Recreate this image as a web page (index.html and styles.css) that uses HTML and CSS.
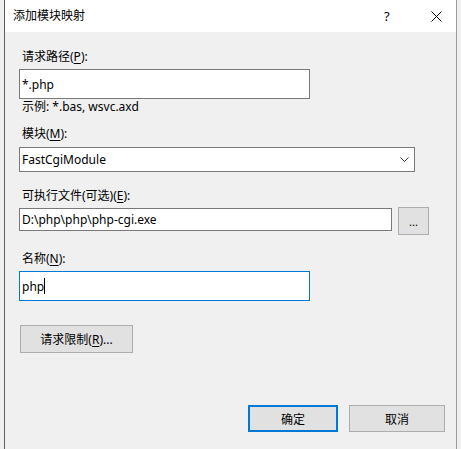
FILE: index.html
```html
<!DOCTYPE html>
<html lang="zh-CN">
  <head>
    <meta charset="UTF-8" />
    <title>添加模块映射</title>
    <link rel="stylesheet" href="styles.css">
  </head>
  <body>
    <div class="dialog">
      <div class="titlebar">
        <span class="title">添加模块映射</span>
        <span class="help">?</span>
        <span class="close">
          <svg width="11" height="11" viewBox="0 0 11 11">
            <path d="M0.5,0.5 L10.5,10.5 M10.5,0.5 L0.5,10.5" stroke="#000" stroke-width="1" fill="none"/>
          </svg>
        </span>
      </div>

      <div class="content">
        <label class="label first">请求路径(<u>P</u>):</label>
        <div class="field tall short">*.php</div>
        <div class="hint">示例: *.bas, wsvc.axd</div>

        <label class="label">模块(<u>M</u>):</label>
        <div class="field combo">
          <span>FastCgiModule</span>
          <svg width="9" height="5" viewBox="0 0 9 5">
            <polyline points="0.5,0.5 4.5,4.5 8.5,0.5" stroke="#333" stroke-width="1" fill="none"/>
          </svg>
        </div>

        <label class="label">可执行文件(可选)(<u>E</u>):</label>
        <div class="file-row">
          <div class="field path">D:\php\php\php-cgi.exe</div>
          <button class="btn browse">...</button>
        </div>

        <label class="label">名称(<u>N</u>):</label>
        <div class="field tall short focused">php<span class="caret"></span></div>

        <button class="btn limits">请求限制(<u>R</u>)...</button>

        <div class="footer">
          <button class="btn ok">确定</button>
          <button class="btn cancel">取消</button>
        </div>
      </div>
    </div>
  </body>
</html>
```

FILE: styles.css
```css
body {
  margin: 0;
  background-color: #f0f0f0;
  font-family: "Noto Sans", "Noto Sans CJK SC", sans-serif;
  font-size: 12px;
  color: #000;
}

.dialog {
  margin-left: 4px;
  width: 451px;
  height: 449px;
  border-left: 1px solid #5f5f5f;
  border-right: 1px solid #9a9a9a;
  display: flex;
  flex-direction: column;
}

.titlebar {
  height: 32px;
  background-color: #fff;
  display: flex;
  align-items: center;
  padding-left: 8px;
}

.title {
  flex: 1;
  line-height: 16px;
}

.help {
  width: 14px;
  margin-right: 33px;
  font-size: 13px;
}

.close {
  width: 11px;
  margin-right: 14px;
  display: flex;
}

.content {
  flex: 1;
  display: flex;
  flex-direction: column;
  align-items: flex-start;
  padding: 0 0 17px 14px;
}

.label {
  display: block;
  line-height: 16px;
  margin-top: 16px;
  padding-left: 3px;
}

.label.first {
  margin-top: 17px;
}

u {
  text-decoration-thickness: 1px;
  text-underline-offset: 2px;
}

.field {
  box-sizing: border-box;
  margin-top: 4px;
  background-color: #fff;
  border: 1px solid #7a7a7a;
  padding: 0 3px 0 2px;
  display: flex;
  align-items: center;
  height: 23px;
}

.field.tall {
  height: 30px;
}

.field.short {
  width: 291px;
}

.hint {
  line-height: 16px;
  margin-top: 0;
  padding-left: 3px;
}

.hint + .label {
  margin-top: 11px;
}

.combo {
  width: 396px;
  height: 25px;
  margin-top: 5px;
  justify-content: space-between;
  padding-right: 5px;
}

.file-row {
  display: flex;
  align-items: flex-start;
  margin-top: 3px;
}

.path {
  width: 373px;
  margin-top: 1px;
}

.focused {
  border-color: #0078d7;
}

.caret {
  display: inline-block;
  width: 1px;
  height: 16px;
  background-color: #000;
}

.btn {
  font: inherit;
  box-sizing: border-box;
  background-color: #e1e1e1;
  border: 1px solid #adadad;
  padding: 0;
  color: #000;
}

.browse {
  width: 31px;
  height: 28px;
  margin-left: 6px;
  font-size: 11px;
}

.limits {
  width: 113px;
  height: 28px;
  margin-top: 24px;
  margin-left: 1px;
}

.footer {
  margin-top: auto;
  align-self: stretch;
  display: flex;
  justify-content: flex-end;
  gap: 11px;
  padding-right: 11px;
}

.ok,
.cancel {
  height: 27px;
}

.ok {
  width: 90px;
  border: 2px solid #0078d7;
}

.cancel {
  width: 96px;
}
```
